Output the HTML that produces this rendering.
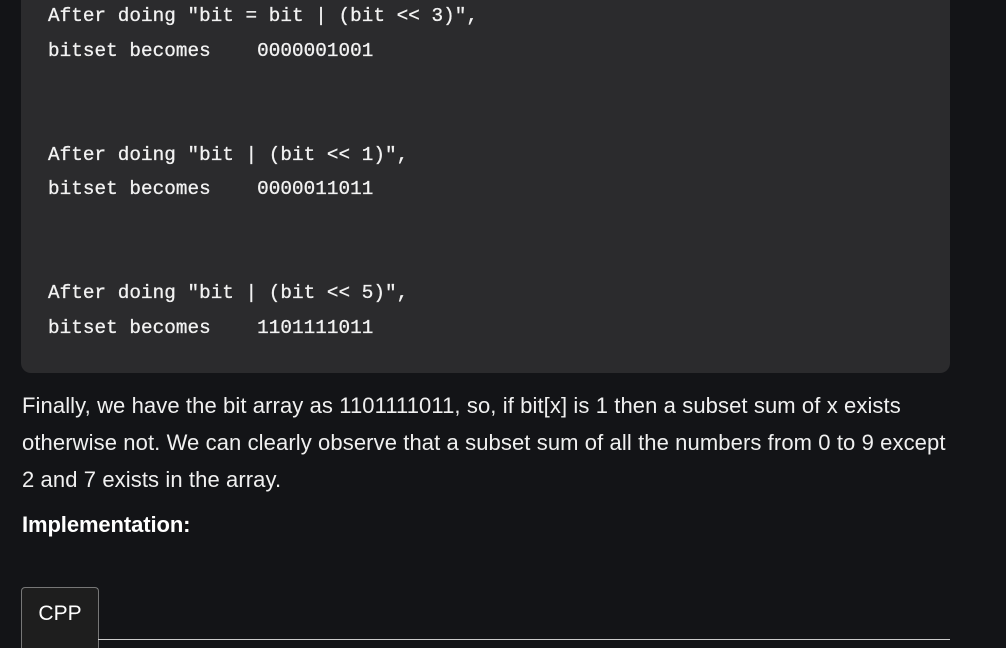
<!DOCTYPE html>
<html><head><style>
body{margin:0;width:1006px;height:646px;background:#131417;overflow:hidden;position:relative;font-family:"Liberation Sans",sans-serif;color:#fff}
.code{position:absolute;left:21px;top:-20px;width:929px;height:393px;background:#2b2b2d;border-radius:10px}
.code pre{margin:0;position:absolute;left:27px;top:19px;font-family:"Liberation Mono",monospace;font-size:19.3px;line-height:34.65px;color:#f2f2f2;letter-spacing:0.05px;-webkit-text-stroke:0.3px #f2f2f2}
.p{position:absolute;left:22px;top:387px;width:990px;white-space:nowrap;font-size:22px;letter-spacing:0.1px;line-height:37px;color:#f0f0f0}
.h{position:absolute;left:22px;top:512px;font-size:22px;font-weight:bold;letter-spacing:-0.1px}
.tab{position:absolute;left:21px;top:587px;width:76px;height:60px;border:1px solid #777;border-bottom:none;border-radius:4px 4px 0 0;background:#1e1e1e;font-size:21px;text-align:center;line-height:52px}
.line{position:absolute;left:98px;top:639px;width:852px;height:1px;background:#ccc}
</style></head><body>
<div class="code"><pre>After doing "bit = bit | (bit &lt;&lt; 3)",
bitset becomes    0000001001


After doing "bit | (bit &lt;&lt; 1)",
bitset becomes    0000011011


After doing "bit | (bit &lt;&lt; 5)",
bitset becomes    1101111011</pre></div>
<div class="p">Finally, we have the bit array as 1101111011, so, if bit[x] is 1 then a subset sum of x exists<br>otherwise not. We can clearly observe that a subset sum of all the numbers from 0 to 9 except<br>2 and 7 exists in the array.</div>
<div class="h">Implementation:</div>
<div class="tab">CPP</div>
<div class="line"></div>
</body></html>
